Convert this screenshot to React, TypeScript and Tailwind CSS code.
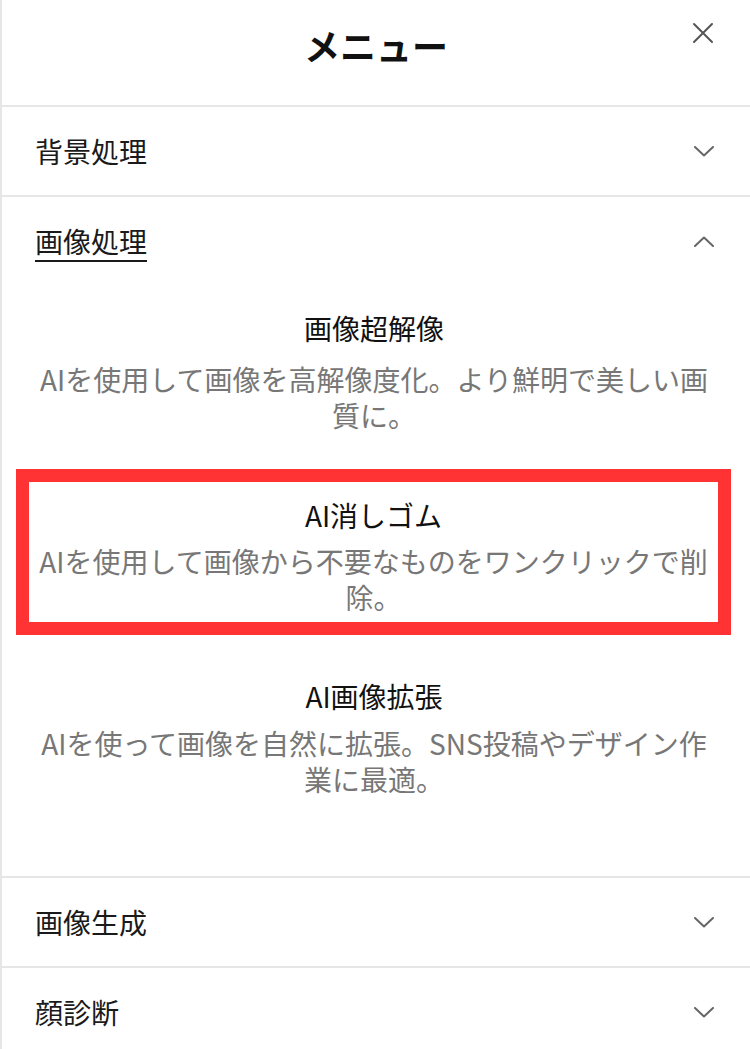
import React, { useState } from "react";

const sections = [
  { id: "bg", label: "背景処理" },
  { id: "img", label: "画像処理" },
  { id: "gen", label: "画像生成" },
  { id: "face", label: "顔診断" },
];

const imageItems = [
  { title: "画像超解像", desc: "AIを使用して画像を高解像度化。より鮮明で美しい画質に。", gap: "mt-[15px]" },
  { title: "AI消しゴム", desc: "AIを使用して画像から不要なものをワンクリックで削除。", gap: "mt-[10px]", active: true },
  { title: "AI画像拡張", desc: "AIを使って画像を自然に拡張。SNS投稿やデザイン作業に最適。", gap: "mt-[11px]" },
];

const Chevron = ({ up }: { up?: boolean }) => (
  <svg width="20" height="11" viewBox="0 0 20 11" fill="none" className="shrink-0">
    <path
      d={up ? "M1 10 L10 1.5 L19 10" : "M1 1 L10 9.5 L19 1"}
      stroke="#666666"
      strokeWidth="2"
      strokeLinecap="round"
      strokeLinejoin="round"
    />
  </svg>
);

const App = () => {
  const [open, setOpen] = useState("img");

  return (
    <div
      className="w-[750px] min-h-[1049px] bg-white border-l-2 border-[#e6e6e6] text-[#1a1a1a]"
      style={{ fontFamily: '"Noto Sans CJK JP", "Noto Sans", sans-serif' }}
    >
      <div className="relative h-[107px] border-b-2 border-[#e6e6e6] flex justify-center">
        <h1 className="mt-[22px] h-[46px] leading-[46px] text-[36px] font-bold text-[#111]">メニュー</h1>
        <button className="absolute right-[36px] top-[22px]">
          <svg width="22" height="22" viewBox="0 0 22 22" fill="none">
            <path d="M2 2 L20 20 M20 2 L2 20" stroke="#555555" strokeWidth="2" strokeLinecap="round" />
          </svg>
        </button>
      </div>

      {sections.map((s) => (
        <div key={s.id} className="border-b-2 border-[#e6e6e6]">
          <div
            className="h-[88px] pl-[33px] pr-[36px] flex items-center justify-between cursor-pointer"
            onClick={() => setOpen(open === s.id ? "" : s.id)}
          >
            <span
              className={
                "text-[28px] leading-[36px] " +
                (open === s.id ? "underline decoration-2 underline-offset-[7px]" : "")
              }
            >
              {s.label}
            </span>
            <Chevron up={open === s.id} />
          </div>

          {open === s.id && s.id === "img" && (
            <div className="pt-[10px] pb-[72px]">
              {imageItems.map((it) => (
                <div
                  key={it.title}
                  className={
                    it.active
                      ? "ml-[14px] mr-[19px] border-[13px] border-[#ff3333] mt-[29px] mb-[28px]"
                      : "ml-[28px] mr-[32px]"
                  }
                >
                  <div className="pt-[15px] pb-[7px] text-center">
                    <div className="text-[28px] leading-[36px] text-[#111]">{it.title}</div>
                    <p className={it.gap + " text-[28px] leading-[36px] text-[#777777]"}>{it.desc}</p>
                  </div>
                </div>
              ))}
            </div>
          )}
        </div>
      ))}
    </div>
  );
};

export default App;
